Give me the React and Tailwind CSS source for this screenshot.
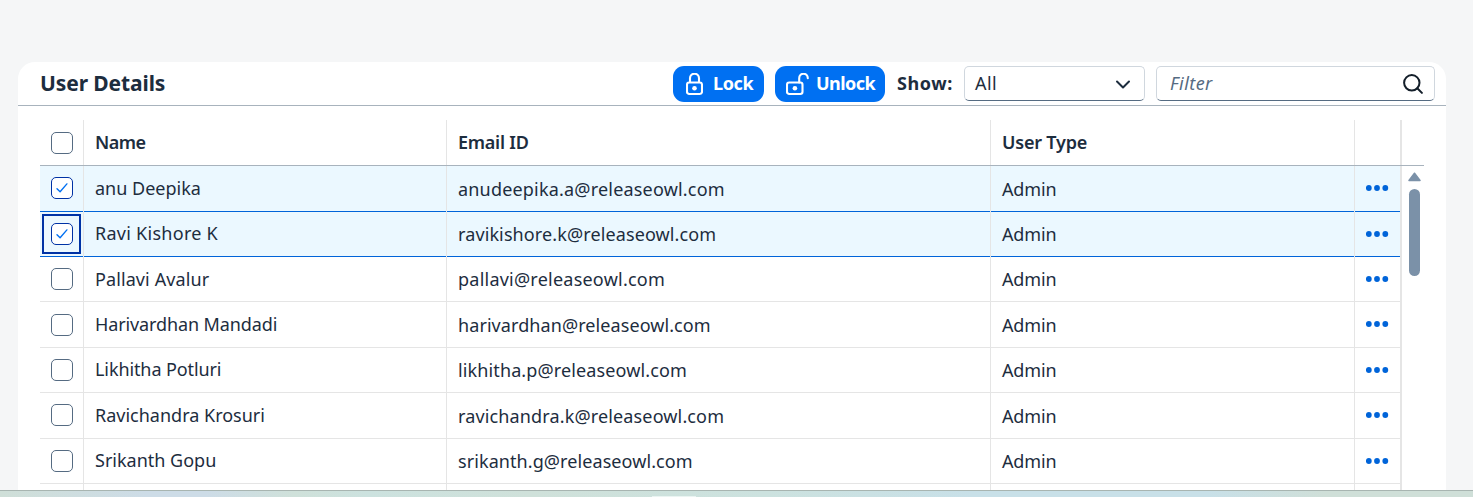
const users = [
  { name: "anu Deepika", email: "anudeepika.a@releaseowl.com", checked: true, h: "h-[46px]", nameFit: "pb-px", boxFit: "pb-px", textFit: "pt-px", emailTrack: "tracking-[0.19px]" },
  { name: "Ravi Kishore K", email: "ravikishore.k@releaseowl.com", checked: true, focused: true, h: "h-[45px]", nameFit: "pb-[2px] tracking-[0.27px]", boxFit: "", textFit: "", emailTrack: "tracking-[0.11px]" },
  { name: "Pallavi Avalur", email: "pallavi@releaseowl.com", h: "h-[45px]", nameFit: "pb-px tracking-[0.1px]", boxFit: "", textFit: "", emailTrack: "tracking-[0.23px]" },
  { name: "Harivardhan Mandadi", email: "harivardhan@releaseowl.com", h: "h-[46px]", nameFit: "pb-px tracking-[-0.11px]", boxFit: "", textFit: "pt-px", emailTrack: "tracking-[0.08px]" },
  { name: "Likhitha Potluri", email: "likhitha.p@releaseowl.com", h: "h-[45px]", nameFit: "pb-[2px] tracking-[-0.1px]", boxFit: "", textFit: "", emailTrack: "tracking-[0.12px]" },
  { name: "Ravichandra Krosuri", email: "ravichandra.k@releaseowl.com", h: "h-[46px]", nameFit: "pb-px", boxFit: "pb-px", textFit: "pt-px", emailTrack: "tracking-[0.14px]" },
  { name: "Srikanth Gopu", email: "srikanth.g@releaseowl.com", h: "h-[45px]", nameFit: "pb-[2px]", boxFit: "", textFit: "", emailTrack: "tracking-[0.08px]" },
];

const columns = "grid grid-cols-[44px_363px_544px_364px_47px]";

function Checkbox({ checked }) {
  return (
    <span
      className={`flex size-[22px] shrink-0 items-center justify-center rounded-[5px] border bg-white ${
        checked ? "border-[#0032a5]" : "border-[#556b82]"
      }`}
    >
      {checked && (
        <svg width="12" height="12" viewBox="0 0 12 12" fill="none" stroke="#0070f2" strokeWidth="1.4" strokeLinecap="round" strokeLinejoin="round">
          <path d="M1 6.7 4.1 9.8 10.9 1.9" />
        </svg>
      )}
    </span>
  );
}

function Cell({ children, selected, last, className = "" }) {
  return (
    <div className={`min-w-0 border-[#e5e5e5] ${last ? "border-r-2" : "border-r"}`}>
      <div
        className={`flex h-full items-center border-b ${
          selected ? "border-[#0064d9] bg-[#ebf8ff]" : "border-[#e5e5e5] bg-white"
        } ${className}`}
      >
        {children}
      </div>
    </div>
  );
}

function UserRow({ user }) {
  return (
    <div className={`${columns} ${user.h}`}>
      <Cell selected={user.checked} className={`${user.focused ? "pl-0.5" : "pl-[11px]"} ${user.boxFit}`}>
        {user.focused ? (
          <div className="flex h-10 w-[39px] items-center border-2 border-[#0032a5] pl-[7px]">
            <Checkbox checked />
          </div>
        ) : (
          <Checkbox checked={user.checked} />
        )}
      </Cell>
      <Cell selected={user.checked} className={`pl-[11px] ${user.nameFit}`}>{user.name}</Cell>
      <Cell selected={user.checked} className={`pl-[11px] ${user.textFit} ${user.emailTrack}`}>{user.email}</Cell>
      <Cell selected={user.checked} className={`pl-[11px] tracking-[-0.15px] ${user.textFit}`}>Admin</Cell>
      <Cell selected={user.checked} last className="pb-px pl-[11px]">
        <svg width="23" height="8" viewBox="0 0 23 8" fill="#0064d9">
          <ellipse cx="2.8" cy="4" rx="2.9" ry="3" />
          <ellipse cx="11" cy="4" rx="2.9" ry="3" />
          <ellipse cx="19.3" cy="4" rx="2.9" ry="3" />
        </svg>
      </Cell>
    </div>
  );
}

function LockIcon() {
  return (
    <svg className="shrink-0" width="17" height="23" viewBox="0 0 17 23" fill="none" stroke="white" strokeWidth="2.1">
      <rect x="1" y="9.5" width="15" height="11.5" rx="2.2" />
      <path d="M4 9.5V5.3a4.5 4.6 0 0 1 9 0V9.5" />
      <circle cx="8.5" cy="15.2" r="2.3" fill="white" stroke="none" />
    </svg>
  );
}

function UnlockIcon() {
  return (
    <svg className="shrink-0" width="23" height="23" viewBox="0 0 23 23" fill="none" stroke="white" strokeWidth="2.1" strokeLinecap="round">
      <rect x="1" y="9.5" width="15.5" height="11.5" rx="2.2" />
      <path d="M13.2 9.5V5.3a4.3 4.6 0 0 1 8.6 0" />
      <circle cx="8.9" cy="15.2" r="2.3" fill="white" stroke="none" />
    </svg>
  );
}

export default function App() {
  return (
    <div className="flex h-[497px] w-[1473px] flex-col overflow-hidden bg-[#f5f6f7] font-['Noto_Sans',sans-serif] text-[18px] leading-6 whitespace-nowrap text-[#1d2d3e]">
      <main className="min-h-0 flex-1 overflow-hidden pl-[18px] pt-[62px]">
        <section className="h-[440px] w-[1428px] rounded-t-[17px] bg-white">
          <header className="flex h-11 items-start border-b border-[#a8b3bd] pl-[22px] pt-1">
            <h1 className="mt-[5px] w-[633px] text-[21px] font-bold tracking-[-0.1px]">User Details</h1>
            <button className="flex h-9 w-[91px] items-center rounded-[11px] bg-[#0070f2] pl-[13px] font-bold text-white">
              <LockIcon />
              <span className="mb-0.5 ml-[10px] tracking-[-0.4px]">Lock</span>
            </button>
            <button className="ml-[11px] flex h-9 w-[110px] items-center rounded-[11px] bg-[#0070f2] pl-[11px] font-bold text-white">
              <UnlockIcon />
              <span className="mb-0.5 ml-[7px] tracking-[-0.55px]">Unlock</span>
            </button>
            <span className="ml-[12px] mt-[5px] w-[67px] font-bold tracking-[0.6px]">Show:</span>
            <div className="flex h-[35px] w-[181px] items-center justify-between rounded-[5px] border border-[#d0d7de] border-b-[#556b82] bg-white pl-[10px] pr-[13px]">
              <span className="mb-px tracking-[0.4px]">All</span>
              <svg width="16" height="10" viewBox="0 0 16 10" fill="none" stroke="#1d2d3e" strokeWidth="2" strokeLinecap="round" strokeLinejoin="round">
                <path d="m2 2.5 6 6 6-6" />
              </svg>
            </div>
            <div className="ml-[11px] flex h-[35px] w-[279px] items-center justify-between rounded-[5px] border border-[#d0d7de] border-b-[#556b82] bg-white pl-[13px] pr-[11px]">
              <span className="mb-px italic tracking-[0.45px] text-[#556b82]">Filter</span>
              <svg width="20" height="20" viewBox="0 0 20 20" fill="none" stroke="#131e29" strokeWidth="2" strokeLinecap="round">
                <circle cx="8.8" cy="8.8" r="7.7" />
                <path d="m14.3 14.3 4.6 4.6" />
              </svg>
            </div>
          </header>
          <div className="flex pl-[22px] pt-[14px]">
            <div className="w-[1362px]">
              <div className={`${columns} h-[46px] border-b border-[#a8b3bd] font-semibold`}>
                <div className="flex items-center border-r border-[#e5e5e5] pl-[11px]"><Checkbox /></div>
                <div className="flex items-center border-r border-[#e5e5e5] pb-[2px] pl-[11px] tracking-[-0.5px]">Name</div>
                <div className="flex items-center border-r border-[#e5e5e5] pb-[2px] pl-[11px] tracking-[-0.25px]">Email ID</div>
                <div className="flex items-center border-r border-[#e5e5e5] pb-[2px] pl-[11px] tracking-[-0.2px]">User Type</div>
                <div className="border-r-2 border-[#e5e5e5]" />
              </div>
              {users.map((user) => <UserRow key={user.email} user={user} />)}
              <div className={`${columns} h-10`}>
                <Cell /><Cell /><Cell /><Cell /><Cell last />
              </div>
            </div>
            <div className="w-[22px]">
              <div className="h-[46px] border-b border-[#a8b3bd]" />
              <div className="flex flex-col items-center pl-[2px] pt-1.5">
                <svg width="13" height="10" viewBox="0 0 13 10" fill="#7b91a8" stroke="#7b91a8" strokeLinejoin="round" strokeWidth="1.5">
                  <path d="M6.5 1.2 12 8.5H1Z" />
                </svg>
                <div className="mt-[7px] h-[87px] w-[11px] rounded-full bg-[#7b91a8]" />
              </div>
            </div>
          </div>
        </section>
      </main>
      <footer className="flex h-[7px] shrink-0 items-end border-t border-[#a8b5b1]">
        <div className="flex h-full w-full items-end bg-[linear-gradient(90deg,#cfdfd8_0%,#cddce7_10%,#cddce7_14%,#cfe1da_20%,#cce2df_25%,#cfe1da_36%,#cce2df_52%,#c8e0e8_66%,#c8e0e8_82%,#cfdfd8_90%,#cfdfd8_100%)] pl-[652px]">
          <div className="h-px w-11 bg-[#eaf4f2]" />
        </div>
      </footer>
    </div>
  );
}
